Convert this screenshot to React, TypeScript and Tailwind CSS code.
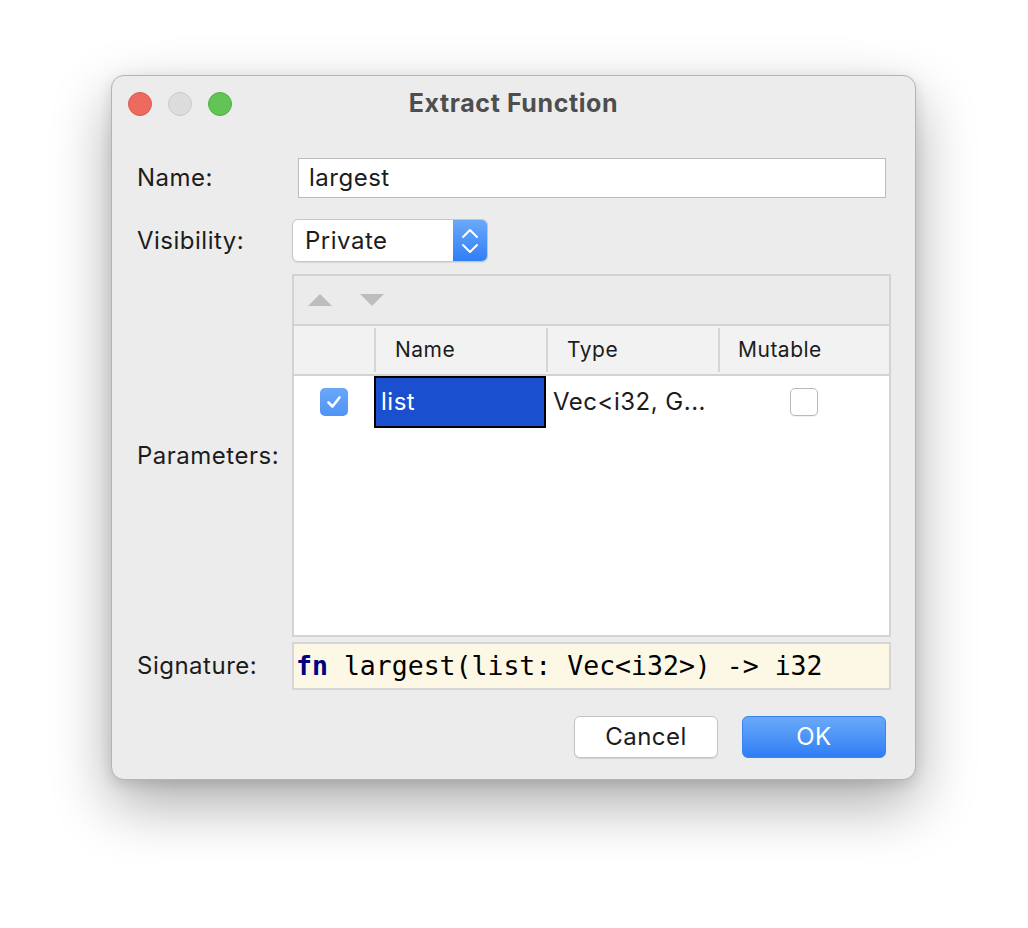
import React from "react";

const UI = { fontFamily: "Inter, 'Noto Sans', sans-serif" };
const MONO = { fontFamily: "'DejaVu Sans Mono', 'Liberation Mono', monospace" };

function Check() {
  return (
    <svg width="18" height="18" viewBox="0 0 18 18" fill="none">
      <path d="M3.5 9.5 L7.5 13.5 L14.5 4.5" stroke="white" strokeWidth="2.6" strokeLinecap="round" strokeLinejoin="round" />
    </svg>
  );
}

export default function App() {
  return (
    <div className="w-[1028px] h-[928px] bg-white pt-[75px] pl-[111px]" style={UI}>
      <div className="w-[805px] h-[705px] rounded-[13px] bg-[#ececec] border border-[#b4b4b4] shadow-[0_24px_60px_rgba(0,0,0,0.33),0_4px_14px_rgba(0,0,0,0.12)] flex flex-col text-[#1c1c1c] text-[24px] tracking-[0.5px]">
        {/* title bar */}
        <div className="h-[55px] grid grid-cols-[1fr_auto_1fr] items-center">
          <div className="flex items-center gap-[16px] pl-[16px] pt-[1px]">
            <div className="w-[24px] h-[24px] rounded-full bg-[#ee6a5f] border border-[#d95a4f]" />
            <div className="w-[24px] h-[24px] rounded-full bg-[#dcdcdc] border border-[#cacaca]" />
            <div className="w-[24px] h-[24px] rounded-full bg-[#61c454] border border-[#52ad47]" />
          </div>
          <div className="text-[25px] font-bold tracking-[0.6px] text-[#4e4e4e] leading-none">Extract Function</div>
          <div />
        </div>

        <div className="flex flex-col pl-[25px] pr-[24px]">
          {/* Name row */}
          <div className="flex items-center mt-[27px] h-[40px]">
            <div className="w-[161px]">Name:</div>
            <div className="w-[588px] h-[40px] bg-white border border-[#bcbcbc] flex items-center pl-[10px]">largest</div>
          </div>

          {/* Visibility row */}
          <div className="flex items-center mt-[21px] h-[43px]">
            <div className="w-[155px]">Visibility:</div>
            <div className="w-[196px] h-[43px] rounded-[6px] bg-white border border-[#c6c6c6] shadow-[0_1px_1px_rgba(0,0,0,0.08)] flex overflow-hidden">
              <div className="flex-1 flex items-center pl-[12px]">Private</div>
              <div className="w-[34px] h-full bg-gradient-to-b from-[#6aa9f9] to-[#2f7ef6] flex flex-col items-center justify-center gap-[4px]">
                <svg width="18" height="11" viewBox="0 0 18 11" fill="none">
                  <path d="M2 9 L9 2 L16 9" stroke="white" strokeWidth="2" strokeLinecap="round" strokeLinejoin="round" />
                </svg>
                <svg width="18" height="11" viewBox="0 0 18 11" fill="none">
                  <path d="M2 2 L9 9 L16 2" stroke="white" strokeWidth="2" strokeLinecap="round" strokeLinejoin="round" />
                </svg>
              </div>
            </div>
          </div>

          {/* Parameters row */}
          <div className="flex items-center mt-[12px] h-[363px]">
            <div className="w-[155px]">Parameters:</div>
            <div className="w-[599px] h-[363px] border-2 border-[#d3d3d3] flex flex-col bg-white">
              {/* toolbar */}
              <div className="h-[48px] bg-[#ebebeb] flex items-start pt-[18px] pl-[14px] gap-[28px]">
                <svg width="24" height="12" viewBox="0 0 24 12">
                  <polygon points="12,0 24,12 0,12" fill="#bdbdbd" />
                </svg>
                <svg width="24" height="12" viewBox="0 0 24 12">
                  <polygon points="0,0 24,0 12,12" fill="#bdbdbd" />
                </svg>
              </div>
              {/* header */}
              <div className="h-[52px] bg-[#f2f2f2] border-y-2 border-[#d3d3d3] grid grid-cols-[80px_172px_172px_1fr] text-[21px]">
                <div />
                <div className="flex items-center relative pl-[21px]">
                  <div className="absolute left-0 top-[2px] w-[2px] h-[44px] bg-[#d6d6d6]" />
                  Name
                </div>
                <div className="flex items-center relative pl-[21px]">
                  <div className="absolute left-0 top-[2px] w-[2px] h-[44px] bg-[#d6d6d6]" />
                  Type
                </div>
                <div className="flex items-center relative pl-[20px]">
                  <div className="absolute left-0 top-[2px] w-[2px] h-[44px] bg-[#d6d6d6]" />
                  Mutable
                </div>
              </div>
              {/* row */}
              <div className="h-[52px] grid grid-cols-[80px_172px_172px_1fr]">
                <div className="flex items-center justify-center">
                  <div className="w-[28px] h-[28px] rounded-[5px] bg-gradient-to-b from-[#6aa7f9] to-[#4f93f5] flex items-center justify-center">
                    <Check />
                  </div>
                </div>
                <div className="bg-[#1a4fd0] border-2 border-black flex items-center pl-[5px] text-white">list</div>
                <div className="flex items-center pl-[7px] whitespace-nowrap">Vec&lt;i32, G...</div>
                <div className="flex items-center justify-center">
                  <div className="w-[28px] h-[28px] rounded-[5px] bg-white border border-[#b9b9b9] shadow-[0_1px_1px_rgba(0,0,0,0.06)]" />
                </div>
              </div>
            </div>
          </div>

          {/* Signature row */}
          <div className="flex items-center mt-[5px] h-[48px]">
            <div className="w-[155px]">Signature:</div>
            <div className="w-[599px] h-[48px] border-2 border-[#d6d6d6] bg-[#fdf8e6] flex items-center pl-[2px] text-[26.5px] tracking-normal text-black whitespace-nowrap" style={MONO}>
              <span className="font-bold text-[#000080]">fn</span>
              <span>&nbsp;largest(list: Vec&lt;i32&gt;) -&gt; i32</span>
            </div>
          </div>

          {/* Buttons */}
          <div className="flex justify-end gap-[24px] mt-[26px] pr-[5px]">
            <div className="w-[144px] h-[42px] rounded-[6px] bg-white border border-[#c4c4c4] shadow-[0_1px_1px_rgba(0,0,0,0.1)] flex items-center justify-center">Cancel</div>
            <div className="w-[144px] h-[42px] rounded-[6px] bg-gradient-to-b from-[#6aa9f8] to-[#2f7ef6] border border-[#3a84ee] flex items-center justify-center text-white">OK</div>
          </div>
        </div>
      </div>
    </div>
  );
}
